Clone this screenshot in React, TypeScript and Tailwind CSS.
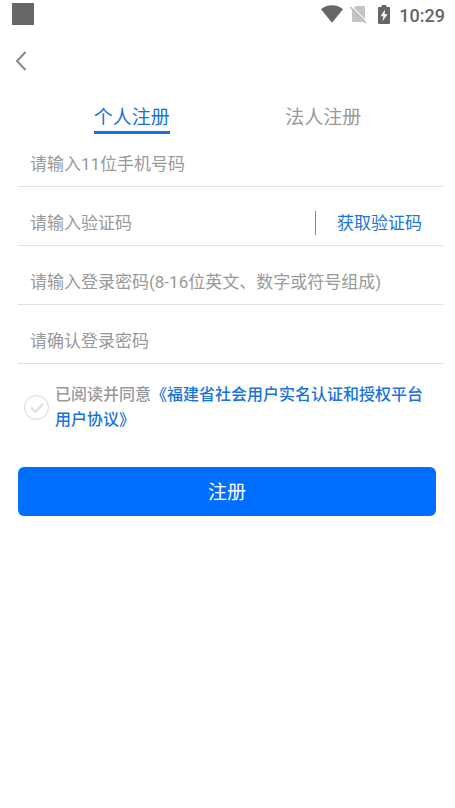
import { useState } from 'react'

const TABS = [
  { value: 'personal', label: '个人注册' },
  { value: 'legal', label: '法人注册' },
]

const FIELD_CLASS =
  'h-11 w-full min-w-0 flex-1 bg-transparent pl-3 text-[17px] text-[#666] placeholder:text-[#999] focus:outline-none'

function StatusBar() {
  return (
    <div className="flex h-8 items-center justify-between pl-3 pr-[10px] text-[#666]">
      <div className="mb-1 size-[22px] bg-[#666]" />
      <div className="flex items-center">
        <div className="flex items-center pb-1">
          <svg className="h-[18px] w-[22px]" viewBox="0 0 22 18" fill="currentColor" aria-hidden="true">
            <path d="M0 4.2C3 1.6 6.8.2 11 .2s8 1.400 11 4L11 17.800z" />
          </svg>
          <svg className="ml-[7px] h-5 w-[17px]" viewBox="0 0 17 20" aria-hidden="true">
            <path d="M6 2h8a1 1 0 0 1 1 1v14a1 1 0 0 1-1 1H3a1 1 0 0 1-1-1V6z" fill="#c4c4c4" />
            <path d="M1.400 2.100 17 18.200" stroke="#fff" strokeWidth="1.200" />
            <path d="M.4 3 15.800 18.900" stroke="#b8b8b8" strokeWidth="1.500" />
          </svg>
          <svg className="ml-[11px] h-[19px] w-3" viewBox="0 0 12 19" aria-hidden="true">
            <path
              d="M3.600 0h4.800v2H11a1 1 0 0 1 1 1v15a1 1 0 0 1-1 1H1a1 1 0 0 1-1-1V3a1 1 0 0 1 1-1h2.600z"
              fill="currentColor"
            />
            <path d="M7.100 4.500 2.500 11.300h2.900l-.9 5L9.600 9.200H6.500z" fill="#fff" />
          </svg>
        </div>
        <span className="ml-[9px] text-lg font-medium leading-8">10:29</span>
      </div>
    </div>
  )
}

export default function App() {
  const [tab, setTab] = useState('personal')
  const [agreed, setAgreed] = useState(false)

  return (
    <div className="min-h-screen bg-white font-[Roboto,'Noto_Sans_CJK_SC',sans-serif]">
      <StatusBar />

      <header className="flex h-[58px] items-center pl-[10px]">
        <button type="button" aria-label="返回" className="flex size-6 items-center justify-center text-[#888]">
          <svg className="size-5" viewBox="0 0 20 20" fill="none" stroke="currentColor" strokeWidth="2" aria-hidden="true">
            <path d="M13.500 1 5 10l8.500 9" />
          </svg>
        </button>
      </header>

      <nav className="grid grid-cols-2 px-9 pt-[14px]">
        {TABS.map((t) => (
          <button
            key={t.value}
            type="button"
            onClick={() => setTab(t.value)}
            className={`justify-self-center border-b-3 text-[19px] leading-[27px] ${
              tab === t.value ? 'border-[#1a73dc] text-[#1a73dc]' : 'border-transparent text-[#999]'
            }`}
          >
            {t.label}
          </button>
        ))}
      </nav>

      <form onSubmit={(e) => e.preventDefault()}>
        <div className="flex flex-col gap-[14px] pl-[18px] pr-3 pt-2">
          <div className="flex border-b border-[#e2e2e2]">
            <input type="tel" aria-label="手机号码" placeholder="请输入11位手机号码" className={FIELD_CLASS} />
          </div>
          <div className="flex items-center border-b border-[#e2e2e2]">
            <input type="text" aria-label="验证码" placeholder="请输入验证码" className={FIELD_CLASS} />
            <button type="button" className="mr-[21px] h-6 border-l border-[#888] pl-[21px] text-[17px] leading-6 text-[#1a73dc]">
              获取验证码
            </button>
          </div>
          <div className="flex border-b border-[#e2e2e2]">
            <input
              type="password"
              aria-label="登录密码"
              placeholder="请输入登录密码(8-16位英文、数字或符号组成)"
              className={FIELD_CLASS}
            />
          </div>
          <div className="flex border-b border-[#e2e2e2]">
            <input type="password" aria-label="确认登录密码" placeholder="请确认登录密码" className={FIELD_CLASS} />
          </div>
        </div>

        <div className="flex items-center gap-[6px] pl-6 pr-7 pt-[18px]">
          <div className="relative size-[25px] shrink-0">
            <input
              id="agree"
              type="checkbox"
              checked={agreed}
              onChange={(e) => setAgreed(e.target.checked)}
              className="block size-full appearance-none rounded-full border border-[#d8d8d8] checked:border-[#1a73dc]"
            />
            <svg
              className={`pointer-events-none absolute inset-0 size-full ${agreed ? 'text-[#1a73dc]' : 'text-[#dcdcdc]'}`}
              viewBox="0 0 25 25"
              fill="none"
              stroke="currentColor"
              strokeWidth="2"
              aria-hidden="true"
            >
              <path d="m7 12.500 4.300 4.300L18.800 9" />
            </svg>
          </div>
          <p className="flex-1 text-base leading-[25px] font-medium text-[#999]">
            <label htmlFor="agree">已阅读并同意</label>
            <a href="#agreement" className="text-[#1a73dc]">
              《福建省社会用户实名认证和授权平台用户协议》
            </a>
          </p>
        </div>

        <div className="pl-[18px] pr-[19px] pt-[35px]">
          <button type="submit" className="h-[49px] w-full rounded-md bg-[#006eff] pt-1 text-[19px] text-white">
            注册
          </button>
        </div>
      </form>
    </div>
  )
}
